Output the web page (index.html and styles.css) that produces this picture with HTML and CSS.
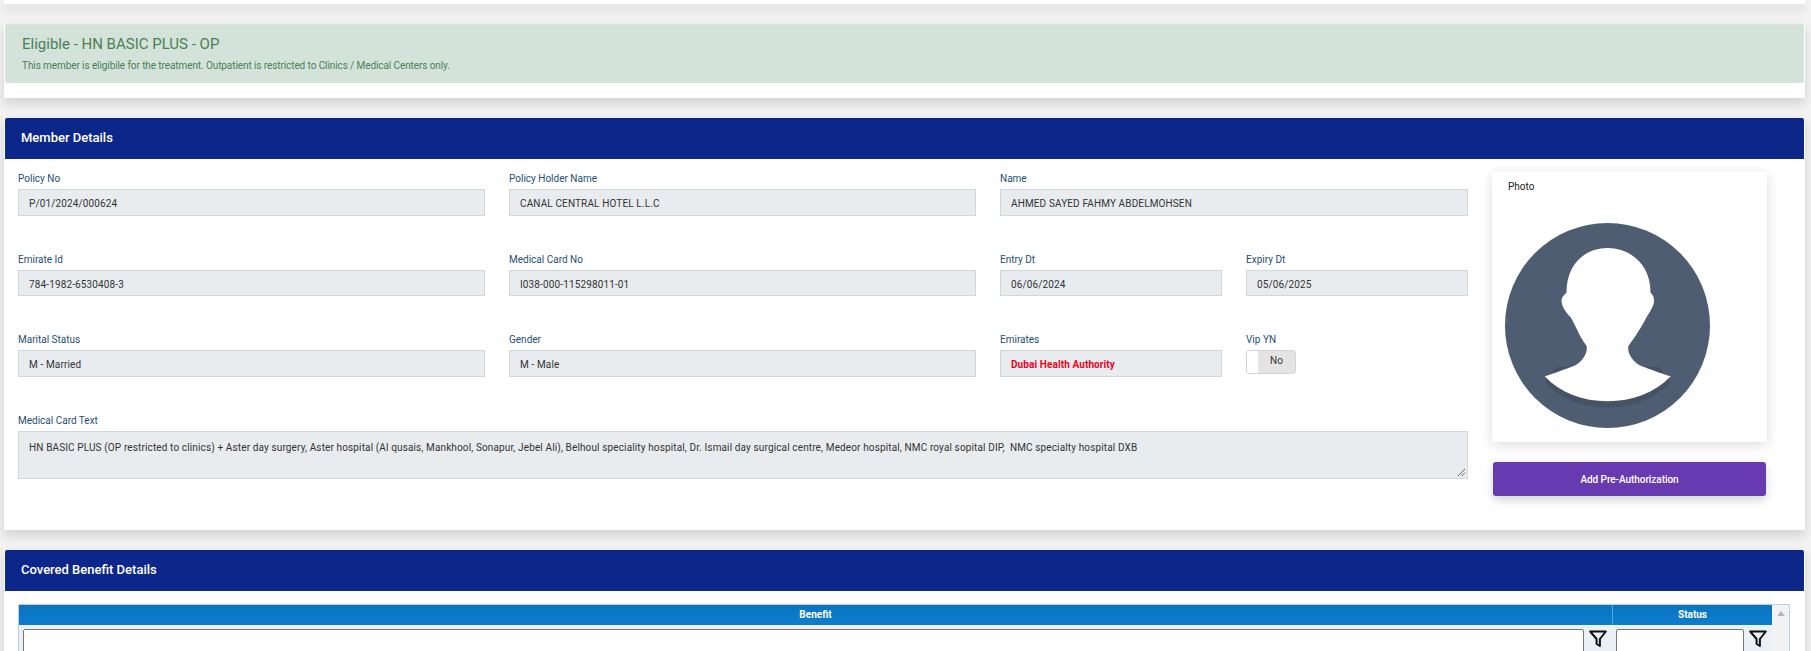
FILE: index.html
```html
<!DOCTYPE html>
<html lang="en">
<head>
    <meta charset="UTF-8">
    <title>Member Eligibility</title>
    <link rel="stylesheet" href="styles.css">
</head>
<body>
    <!-- bottom edge of the search card, the rest is scrolled away -->
    <div class="card top-card"></div>

    <div class="card alert-card">
        <div class="alert">
            <h4>Eligible - HN BASIC PLUS - OP</h4>
            <p>This member is eligibile for the treatment. Outpatient is restricted to Clinics / Medical Centers only.</p>
        </div>
    </div>

    <div class="card member-card">
        <div class="card-header">Member Details</div>
        <div class="member-body">
            <div class="fields">
                <div class="field">
                    <label>Policy No</label>
                    <div class="input">P/01/2024/000624</div>
                </div>
                <div class="field">
                    <label>Policy Holder Name</label>
                    <div class="input">CANAL CENTRAL HOTEL L.L.C</div>
                </div>
                <div class="field">
                    <label>Name</label>
                    <div class="input">AHMED SAYED FAHMY ABDELMOHSEN</div>
                </div>

                <div class="field">
                    <label>Emirate Id</label>
                    <div class="input">784-1982-6530408-3</div>
                </div>
                <div class="field">
                    <label>Medical Card No</label>
                    <div class="input">I038-000-115298011-01</div>
                </div>
                <div class="field-pair">
                    <div class="field">
                        <label>Entry Dt</label>
                        <div class="input">06/06/2024</div>
                    </div>
                    <div class="field">
                        <label>Expiry Dt</label>
                        <div class="input">05/06/2025</div>
                    </div>
                </div>

                <div class="field">
                    <label>Marital Status</label>
                    <div class="input">M - Married</div>
                </div>
                <div class="field">
                    <label>Gender</label>
                    <div class="input">M - Male</div>
                </div>
                <div class="field-pair">
                    <div class="field">
                        <label>Emirates</label>
                        <div class="input input-red">Dubai Health Authority</div>
                    </div>
                    <div class="field">
                        <label>Vip YN</label>
                        <div class="toggle">
                            <span class="toggle-knob"></span>
                            <span class="toggle-text">No</span>
                        </div>
                    </div>
                </div>

                <div class="field field-wide">
                    <label>Medical Card Text</label>
                    <div class="input textarea">HN BASIC PLUS (OP restricted to clinics) + Aster day surgery, Aster hospital (Al qusais, Mankhool, Sonapur, Jebel Ali), Belhoul speciality hospital, Dr. Ismail day surgical centre, Medeor hospital, NMC royal sopital DIP,&nbsp; NMC specialty hospital DXB
                        <svg class="resize-grip" viewBox="0 0 10 10"><path d="M1 9 9 1M5 9 9 5" stroke="#555" stroke-width="1" fill="none"/></svg>
                    </div>
                </div>
            </div>

            <div class="side">
                <div class="photo-card">
                    <span class="photo-label">Photo</span>
                    <svg class="avatar" viewBox="0 0 100 100">
                        <circle cx="50" cy="50" r="50" fill="#4f5d73"/>
                        <path d="M19.4 77.8C27 86 38 90 50 90C62 90 73 86 80.8 77.8L75 70H25Z" fill="#465366"/>
                        <path d="M19.4 74.8C25 73 30 71 33 70C38 68 40.5 63 39.8 60C36 55 34 49 32 46C29 43 27.6 40 27.6 38C27.6 36 29 35 30 34C30 20 39 12.2 50 12.2C61 12.2 71 20 71 34C72 35 72.7 36 72.7 38C72.7 40 71 43 69 46C67 50 64 55 60.2 60C59.5 63 62 68 67 70C70 71 75 73 80.8 74.8C73 83 62 87 50 87C38 87 27 83 19.4 74.8Z" fill="#fff"/>
                    </svg>
                </div>
                <button class="add-btn">Add Pre-Authorization</button>
            </div>
        </div>
    </div>

    <div class="card benefit-card">
        <div class="card-header">Covered Benefit Details</div>
        <div class="grid-wrap">
            <div class="grid">
                <div class="grid-main">
                    <div class="grid-head">
                        <div class="col-benefit">Benefit</div>
                        <div class="col-status">Status</div>
                    </div>
                    <div class="grid-filter">
                        <div class="col-benefit filter-cell">
                            <input type="text">
                            <svg class="funnel" viewBox="0 0 18 18"><path d="M1.2 1.5H16.8L10.9 9V16L7.6 14V9Z" fill="none" stroke="#111" stroke-width="2" stroke-linejoin="round"/></svg>
                        </div>
                        <div class="col-status filter-cell">
                            <input type="text">
                            <svg class="funnel" viewBox="0 0 18 18"><path d="M1.2 1.5H16.8L10.9 9V16L7.6 14V9Z" fill="none" stroke="#111" stroke-width="2" stroke-linejoin="round"/></svg>
                        </div>
                    </div>
                </div>
                <div class="scrollbar"><span class="scroll-up"></span></div>
            </div>
        </div>
    </div>
</body>
</html>
```

FILE: styles.css
```css
html, body {
    height: 651px;
    overflow: hidden;
}
body {
    margin: 0;
    background-color: #f2f2f2;
    font-family: Roboto, "Liberation Sans", sans-serif;
    font-size: 10px;
    color: #333;
}
.card {
    margin-left: 4px;
    width: 1801px;
    box-sizing: border-box;
    padding: 0 1px;
    background-color: #fff;
    box-shadow: 0 5px 10px rgba(0, 0, 0, 0.14);
}
.top-card {
    height: 4px;
}
.alert-card {
    margin-top: 20px;
    padding-bottom: 15px;
}
.alert {
    height: 59px;
    box-sizing: border-box;
    padding: 9px 16px;
    background-color: #d4e3d9;
    border: 1px solid #d9e6dc;
    color: #4a8055;
}
.alert h4 {
    margin: 0;
    font-size: 15px;
    font-weight: 400;
    line-height: 20px;
}
.alert p {
    margin: 5px 0 0;
    font-size: 10px;
    line-height: 14px;
    letter-spacing: -0.09px;
}
.member-card {
    margin-top: 20px;
    height: 412px;
}
.benefit-card {
    margin-top: 20px;
    height: 200px;
}
.card-header {
    height: 41px;
    line-height: 39px;
    padding-left: 16px;
    background-color: #0c2789;
    color: #fff;
    font-size: 13px;
    font-weight: 500;
    border-radius: 2px 2px 0 0;
}
.member-body {
    display: flex;
    padding: 14px 0 0 13px;
}
.fields {
    width: 1450px;
    display: grid;
    grid-template-columns: 467px 467px 468px;
    column-gap: 24px;
    row-gap: 38px;
    align-items: start;
    align-content: start;
}
.field-wide {
    grid-column: 1 / -1;
}
.field-pair {
    display: grid;
    grid-template-columns: 222px 222px;
    column-gap: 24px;
}
label {
    display: block;
    height: 16px;
    line-height: 12px;
    font-size: 10px;
    color: #1d4f73;
}
.input {
    box-sizing: border-box;
    height: 26.5px;
    padding: 0 10px;
    line-height: 27px;
    background-color: #e9ecef;
    border: 1px solid #d3d7da;
    font-size: 10px;
    letter-spacing: 0.13px;
    color: #333;
}
.input-red {
    color: #f0001c;
    font-weight: 700;
    letter-spacing: 0.1px;
}
.textarea {
    position: relative;
    height: 48px;
    line-height: 14px;
    padding-top: 9px;
}
.resize-grip {
    position: absolute;
    right: 1px;
    bottom: 1px;
    width: 9px;
    height: 9px;
}
.toggle {
    display: flex;
    width: 50px;
    height: 24px;
    box-sizing: border-box;
    background-color: #e4e4e4;
    border: 1px solid #d3d6d9;
    border-radius: 3px;
}
.toggle-knob {
    width: 11px;
    background-color: #fff;
    border-radius: 2px 0 0 2px;
}
.toggle-text {
    flex: 1;
    text-align: center;
    line-height: 19px;
    font-size: 10px;
}
.side {
    margin: -1px 0 0 24px;
    width: 275px;
}
.photo-card {
    height: 270px;
    box-sizing: border-box;
    padding: 9px 16px;
    background-color: #fff;
    box-shadow: 0 3px 12px rgba(0, 0, 0, 0.14);
}
.photo-label {
    display: block;
    font-size: 10px;
    line-height: 12px;
    color: #222;
}
.avatar {
    display: block;
    width: 205px;
    height: 205px;
    margin: 30px 0 0 -3px;
}
.add-btn {
    display: block;
    width: 273px;
    height: 34px;
    margin: 20px 0 0 1px;
    padding: 0;
    border: none;
    border-radius: 3px;
    background-color: #673ab1;
    color: #fff;
    font-family: Roboto, sans-serif;
    font-size: 10px;
    font-weight: 500;
    letter-spacing: -0.05px;
    box-shadow: 0 4px 10px rgba(0, 0, 0, 0.18);
}
.grid-wrap {
    padding: 13px 0 0 13px;
}
.grid {
    display: flex;
    width: 1772px;
    height: 120px;
    box-sizing: border-box;
    border: 1px solid #b7d3ea;
    border-bottom: none;
}
.grid-main {
    width: 1753px;
    flex: none;
}
.grid-head {
    display: flex;
    height: 20px;
    background: linear-gradient(#0b74bd, #0b7ed0);
    color: #fff;
    font-size: 10px;
    font-weight: 700;
    line-height: 20px;
    text-align: center;
}
.col-benefit {
    width: 1593px;
    flex: none;
    box-sizing: border-box;
}
.col-status {
    width: 160px;
    flex: none;
    box-sizing: border-box;
    border-left: 1px solid #4ea6e2;
}
.grid-filter {
    display: flex;
    height: 80px;
    background-color: #ebf0f5;
}
.filter-cell {
    display: flex;
    gap: 5px;
    padding: 4px 5px 0 4px;
    align-items: flex-start;
}
.filter-cell.col-status {
    padding-left: 3px;
    border-left: none;
    margin-left: 1px;
    width: 159px;
}
.filter-cell input {
    flex: 1;
    min-width: 0;
    height: 24px;
    box-sizing: border-box;
    padding: 0;
    margin: 0;
    border: 1px solid #767676;
    border-radius: 2px;
    background-color: #fff;
}
.funnel {
    width: 18px;
    height: 18px;
    margin-top: 1px;
    flex: none;
}
.scrollbar {
    width: 17px;
    flex: none;
    background-color: #f0f2f4;
    position: relative;
}
.scroll-up {
    position: absolute;
    top: 6px;
    left: 5px;
    border-left: 4px solid transparent;
    border-right: 4px solid transparent;
    border-bottom: 5px solid #b5b5b5;
}
```
